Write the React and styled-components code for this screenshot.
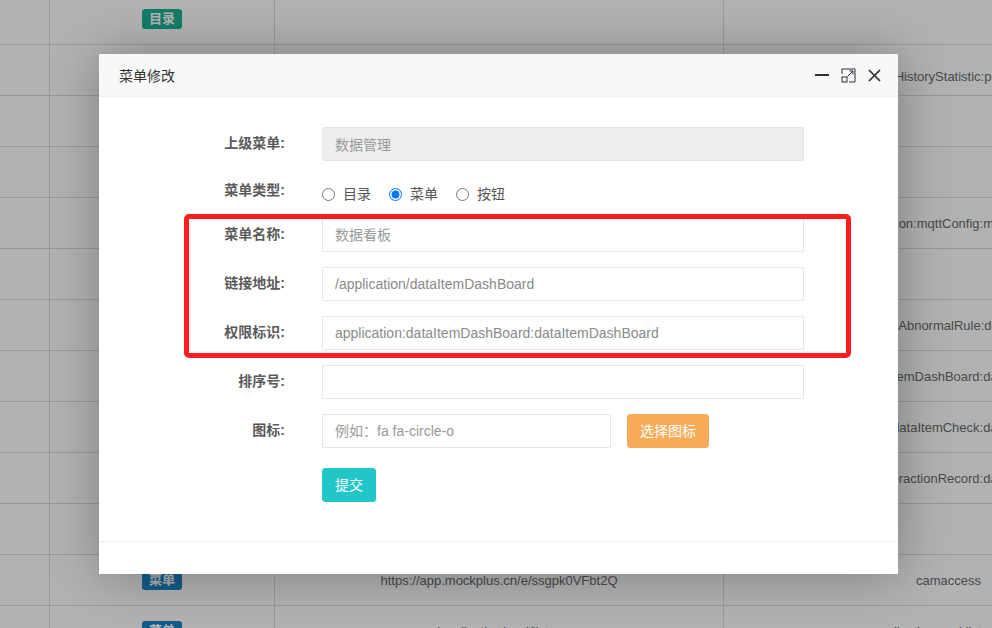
import React from "react";
import styled, { createGlobalStyle } from "styled-components";

const Global = createGlobalStyle`
  html, body { margin: 0; padding: 0; background: #fff; overflow: hidden; }
  * { box-sizing: border-box; }
`;

const FONT = `"Liberation Sans", "Noto Sans CJK SC", Arial, sans-serif`;

const Page = styled.div`
  position: relative;
  width: 992px;
  height: 628px;
  overflow: hidden;
  font-family: ${FONT};
  background: #fff;
`;

const Table = styled.div`
  display: flex;
  flex-direction: column;
  margin-top: -6px;
  width: 1174px;
  color: #676a6c;
  font-size: 13px;
`;

const Row = styled.div`
  display: grid;
  grid-template-columns: 50px 225px 449px 450px;
  height: 51px;
  border-bottom: 1px solid #dddddd;
`;

const Cell = styled.div`
  border-right: 1px solid #dddddd;
  display: flex;
  align-items: center;
  justify-content: center;
  white-space: nowrap;
  overflow: hidden;
  padding-top: ${(p) => p.$shift || 0}px;
`;

const Badge = styled.span`
  display: inline-block;
  padding: 3px 7px;
  border-radius: 3px;
  font-size: 13px;
  line-height: 14px;
  font-weight: 700;
  color: #fff;
  background: ${(p) => (p.$kind === "menu" ? "#1c84c6" : "#1ab394")};
`;

const Shade = styled.div`
  position: absolute;
  inset: 0;
  background: rgba(0, 0, 0, 0.3);
`;

const Modal = styled.div`
  position: absolute;
  left: 99px;
  top: 54px;
  width: 799px;
  height: 520px;
  background: #fff;
  box-shadow: 1px 1px 50px rgba(0, 0, 0, 0.3);
  display: flex;
  flex-direction: column;
`;

const Header = styled.div`
  height: 43px;
  flex: none;
  display: flex;
  align-items: center;
  justify-content: space-between;
  padding: 0 17px 0 20px;
  background: #f8f8f8;
  border-bottom: 1px solid #eeeeee;
`;

const Title = styled.div`
  font-size: 14px;
  color: #333;
`;

const Tools = styled.div`
  display: flex;
  align-items: center;
  gap: 12px;
  color: #2e2d3c;
  svg { display: block; }
`;

const Body = styled.div`
  flex: 1;
  padding-top: 30px;
`;

const Footer = styled.div`
  height: 33px;
  flex: none;
  border-top: 1px solid #eeeeee;
`;

const Form = styled.div`
  display: grid;
  grid-template-columns: 186px 482px;
  column-gap: 37px;
  align-items: start;
`;

const Label = styled.div`
  text-align: right;
  font-size: 14px;
  font-weight: 700;
  color: #5a5a5a;
  line-height: 20px;
  padding-top: ${(p) => (p.$top != null ? p.$top : 6)}px;
  margin-bottom: ${(p) => p.$mb ?? 15}px;
`;

const Field = styled.div`
  margin-bottom: ${(p) => p.$mb ?? 15}px;
  display: flex;
  align-items: center;
  gap: 16px;
  min-height: ${(p) => p.$h || 34}px;
`;

const Input = styled.input`
  width: ${(p) => p.$w || "100%"};
  height: 34px;
  border: 1px solid #e5e6e7;
  background: ${(p) => (p.disabled ? "#eeeeee" : "#fff")};
  padding: 6px 12px;
  font-family: ${FONT};
  font-size: 14px;
  color: #8a8a8a;
  outline: none;
  border-radius: 1px;
  &::placeholder { color: #999; }
  &:disabled { color: #999; }
`;

const Radios = styled.div`
  display: flex;
  align-items: center;
  padding-top: 10px;
  font-size: 14px;
  color: #555;
  line-height: 13px;
`;

const RadioItem = styled.label`
  display: flex;
  align-items: center;
  gap: 8px;
  margin-right: 18px;
  input { width: 13px; height: 13px; margin: 0; }
`;

const Btn = styled.button`
  height: 34px;
  padding: 6px 12px;
  border: 1px solid ${(p) => p.$bg};
  background: ${(p) => p.$bg};
  color: #fff;
  font-family: ${FONT};
  font-size: 14px;
  line-height: 20px;
  border-radius: 3px;
  white-space: nowrap;
`;

const Mark = styled.div`
  position: absolute;
  left: 184px;
  top: 214px;
  width: 667px;
  height: 144px;
  border: 5px solid #ff1e1e;
  border-radius: 5px;
  pointer-events: none;
`;

const rows = [
  { b: "dir", c3: "", c4: "" },
  { c4: "dataItemHistoryStatistic:page:export", shift: 12 },
  { c4: "" },
  { c4: "" },
  { c4: "application:mqttConfig:mqttConfig" },
  { c4: "" },
  { c4: "dataItem:AbnormalRule:deleteBatch" },
  { c4: "application:dataItemDashBoard:dataItemDashBoard" },
  { c4: "application:dataItemCheck:dataItemCheck" },
  { c4: "application:dataInteractionRecord:dataInteractionRecord" },
  { c4: "" },
  { b: "menu", c3: "https://app.mockplus.cn/e/ssgpk0VFbt2Q", c4: "camaccess" },
  { b: "menu", c3: "/application/aqyl/listay", c4: "application:aqyl:listay:view" },
];

const MinIcon = () => (
  <svg width="14" height="14" viewBox="0 0 14 14">
    <rect x="0" y="6" width="14" height="2" fill="currentColor" />
  </svg>
);
const MaxIcon = () => (
  <svg width="15" height="15" viewBox="0 0 15 15" fill="none" stroke="currentColor" strokeWidth="1">
    <path d="M1 6V1h13v13H8" />
    <rect x="1" y="9" width="5" height="5" />
    <path d="M6.5 8.5L12 3M8.5 3H12V6.5" />
  </svg>
);
const CloseIcon = () => (
  <svg width="13" height="13" viewBox="0 0 13 13" stroke="currentColor" strokeWidth="1.7">
    <path d="M1 1L12 12M12 1L1 12" />
  </svg>
);

export default function App() {
  return (
    <Page>
      <Global />
      <Table>
        {rows.map((r, i) => (
          <Row key={i}>
            <Cell />
            <Cell>{r.b && <Badge $kind={r.b}>{r.b === "menu" ? "菜单" : "目录"}</Badge>}</Cell>
            <Cell>{r.c3}</Cell>
            <Cell $shift={r.shift}>{r.c4}</Cell>
          </Row>
        ))}
      </Table>
      <Shade />
      <Modal>
        <Header>
          <Title>菜单修改</Title>
          <Tools>
            <MinIcon />
            <MaxIcon />
            <CloseIcon />
          </Tools>
        </Header>
        <Body>
          <Form>
            <Label>上级菜单:</Label>
            <Field>
              <Input disabled value="数据管理" readOnly />
            </Field>

            <Label $top={4} $mb={15}>菜单类型:</Label>
            <Field $h={27} $mb={15}>
              <Radios>
                <RadioItem>
                  <input type="radio" name="t" />目录
                </RadioItem>
                <RadioItem>
                  <input type="radio" name="t" defaultChecked />菜单
                </RadioItem>
                <RadioItem>
                  <input type="radio" name="t" />按钮
                </RadioItem>
              </Radios>
            </Field>

            <Label>菜单名称:</Label>
            <Field>
              <Input placeholder="数据看板" />
            </Field>

            <Label>链接地址:</Label>
            <Field>
              <Input defaultValue="/application/dataItemDashBoard" />
            </Field>

            <Label>权限标识:</Label>
            <Field>
              <Input defaultValue="application:dataItemDashBoard:dataItemDashBoard" />
            </Field>

            <Label>排序号:</Label>
            <Field>
              <Input />
            </Field>

            <Label $mb={20}>图标:</Label>
            <Field $mb={20}>
              <Input $w="289px" placeholder="例如：fa fa-circle-o" />
              <Btn $bg="#f8ac59">选择图标</Btn>
            </Field>

            <div />
            <Field>
              <Btn $bg="#23c6c8">提交</Btn>
            </Field>
          </Form>
        </Body>
        <Footer />
      </Modal>
      <Mark />
    </Page>
  );
}
